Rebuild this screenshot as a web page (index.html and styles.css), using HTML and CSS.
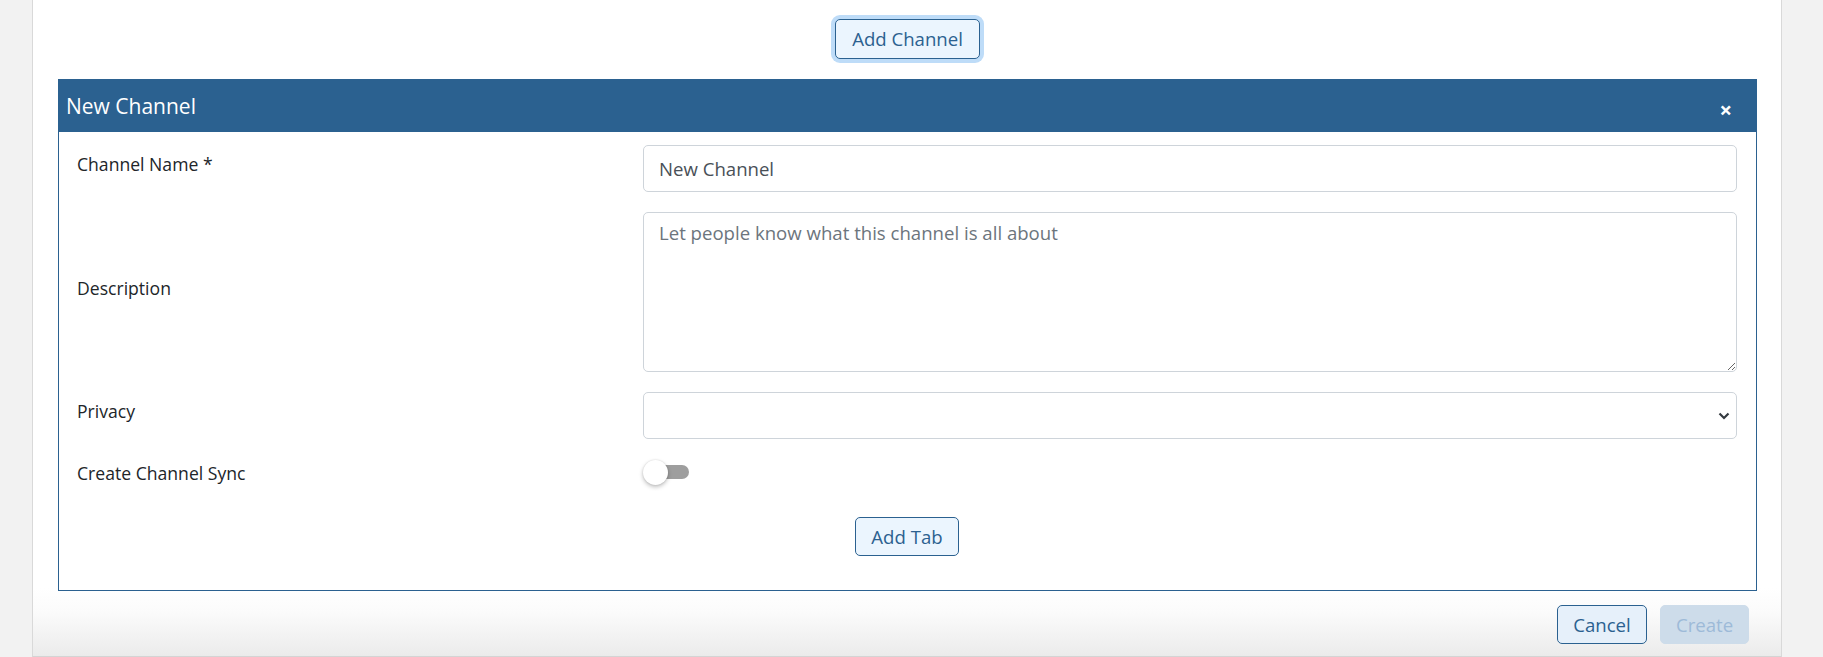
FILE: index.html
```html
<!DOCTYPE html>
<html lang="en">
<head>
<meta charset="utf-8">
<title>New Channel</title>
<link rel="stylesheet" href="styles.css">
</head>
<body>
<div class="page">
  <div class="top">
    <button class="btn btn-outline focused" type="button">Add Channel</button>
  </div>
  <div class="panel">
    <div class="panel-header">
      <span class="panel-title">New Channel</span>
      <span class="close">&times;</span>
    </div>
    <div class="panel-body">
      <div class="form-row">
        <label class="form-label">Channel Name *</label>
        <input class="form-control" type="text" value="New Channel">
      </div>
      <div class="form-row">
        <label class="form-label">Description</label>
        <textarea class="form-control textarea" placeholder="Let people know what this channel is all about"></textarea>
      </div>
      <div class="form-row">
        <label class="form-label">Privacy</label>
        <div class="select-wrap">
          <select class="form-control select"><option></option></select>
          <svg class="chevron" width="12" height="8" viewBox="0 0 12 8"><path d="M1.5 1.5 L6 6 L10.5 1.5" fill="none" stroke="#343a40" stroke-width="2.2"/></svg>
        </div>
      </div>
      <div class="form-row form-row-toggle">
        <label class="form-label">Create Channel Sync</label>
        <div class="switch">
          <span class="track"></span>
          <span class="knob"></span>
        </div>
      </div>
      <div class="center-row">
        <button class="btn btn-outline btn-tab" type="button">Add Tab</button>
      </div>
    </div>
  </div>
  <div class="footer">
    <button class="btn btn-cancel" type="button">Cancel</button>
    <button class="btn btn-create" type="button" disabled>Create</button>
  </div>
</div>
</body>
</html>
```

FILE: styles.css
```css
* { box-sizing: border-box; }
html, body { margin: 0; padding: 0; }
body {
  background: #f2f2f2;
  font-family: "Open Sans", "Noto Sans", sans-serif;
  font-size: 18.6px;
  color: #212529;
  width: 1823px;
  height: 657px;
  overflow: hidden;
}
.page {
  margin: 0 41px 0 32px;
  height: 657px;
  border-left: 1px solid #d9d9d9;
  border-right: 1px solid #d9d9d9;
  border-bottom: 1px solid #d4d4d4;
  background: linear-gradient(to bottom, #ffffff 0, #ffffff 588px, #fbfbfb 612px, #ebebeb 656px);
  padding: 19px 24px 0 25px;
}
.top {
  display: flex;
  justify-content: center;
  margin-bottom: 20px;
}
.btn {
  font-family: inherit;
  font-size: 18.6px;
  line-height: 26px;
  border-radius: 5px;
  padding: 5px 16px;
  border: 1px solid #2b6190;
  cursor: pointer;
}
.btn-outline {
  background: #ebf5fe;
  color: #2b6190;
}
.focused {
  height: 40px;
  width: 145px;
  padding: 5px 0;
  box-shadow: 0 0 0 4px #bedcf8;
}
.panel {
  border: 1px solid #2b6190;
  background: #fff;
}
.panel-header {
  background: #2b6190;
  height: 53px;
  margin: -1px -1px 0 -1px;
  display: flex;
  align-items: center;
  justify-content: space-between;
  padding: 0 25px 0 8px;
  color: #fff;
}
.panel-title {
  font-size: 21px;
  line-height: 28px;
}
.close {
  font-size: 22px;
  font-weight: 700;
  line-height: 22px;
  margin-top: 6px;
}
.panel-body {
  padding: 13px 19px 34px 18px;
}
.form-row {
  display: grid;
  grid-template-columns: 566px 1fr;
  align-items: center;
  margin-bottom: 20px;
}
.form-label {
  font-size: 17.6px;
  line-height: 28px;
  margin-bottom: 9px;
  padding-left: 0;
}
.form-control {
  display: block;
  width: 100%;
  font-family: inherit;
  font-size: 18.6px;
  color: #495057;
  background: #fff;
  border: 1px solid #ced4da;
  border-radius: 5px;
  padding: 8px 15px;
  height: 47px;
  line-height: 28px;
  outline: none;
}
.textarea {
  height: 160px;
  resize: vertical;
  padding-top: 6px;
}
.textarea::placeholder { color: #6c757d; opacity: 1; }
.select-wrap { position: relative; }
.select {
  appearance: none;
  -webkit-appearance: none;
}
.chevron {
  position: absolute;
  right: 7px;
  top: 20px;
}
.form-row-toggle { align-items: start; margin-bottom: 21px; }
.switch {
  position: relative;
  width: 46px;
  height: 25px;
  margin-top: 1px;
}
.track {
  position: absolute;
  left: 10px;
  top: 5px;
  width: 36px;
  height: 14px;
  border-radius: 7px;
  background: #9e9e9e;
}
.knob {
  position: absolute;
  left: 0;
  top: 0;
  width: 25px;
  height: 25px;
  border-radius: 50%;
  background: #fff;
  box-shadow: 0 2px 4px rgba(0,0,0,0.25), 0 0 2px rgba(0,0,0,0.12);
}
.center-row {
  display: flex;
  justify-content: center;
}
.btn-tab {
  width: 104px;
  height: 39px;
  padding: 5px 0;
}
.footer {
  display: flex;
  justify-content: flex-end;
  gap: 13px;
  padding: 14px 8px 0 0;
}
.btn-cancel {
  width: 90px;
  height: 39px;
  padding: 5px 0;
  background: #e6f0fa;
  color: #2b6190;
}
.btn-create {
  width: 89px;
  height: 39px;
  padding: 5px 0;
  background: #cddcea;
  color: #9dbad8;
  border-color: #cddcea;
  cursor: default;
}
```
